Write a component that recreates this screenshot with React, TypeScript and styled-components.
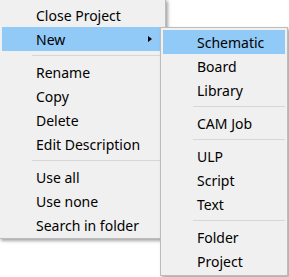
import React from "react";
import styled, {createGlobalStyle} from "styled-components";

const GlobalStyle = createGlobalStyle`
  html, body {
    margin: 0;
    padding: 0;
    background: #ffffff;
  }
  body {
    font-family: "Noto Sans", "Open Sans", "Liberation Sans", sans-serif;
    font-size: 14px;
    color: #000000;
  }
`

type Entry = { label: string, active?: boolean, sub?: boolean } | 'sep'

const mainItems: Entry[] = [
  {label: 'Close Project'},
  {label: 'New', active: true, sub: true},
  'sep',
  {label: 'Rename'},
  {label: 'Copy'},
  {label: 'Delete'},
  {label: 'Edit Description'},
  'sep',
  {label: 'Use all'},
  {label: 'Use none'},
  {label: 'Search in folder'},
]

const newItems: Entry[] = [
  {label: 'Schematic', active: true},
  {label: 'Board'},
  {label: 'Library'},
  'sep',
  {label: 'CAM Job'},
  'sep',
  {label: 'ULP'},
  {label: 'Script'},
  {label: 'Text'},
  'sep',
  {label: 'Folder'},
  {label: 'Project'},
]

const renderItems = (items: Entry[]) =>
  items.map((it, i) =>
    it === 'sep'
      ? <Separator key={i}/>
      : (
        <Item key={i} $active={it.active}>
          <Label>{it.label}</Label>
          {it.sub && <Arrow/>}
        </Item>
      )
  )

export default function App() {
  return (
    <>
      <GlobalStyle/>
      <Stage>
        <MainMenu>{renderItems(mainItems)}</MainMenu>
        <SubMenu>{renderItems(newItems)}</SubMenu>
      </Stage>
    </>
  )
}

const Stage = styled.div`
    position: relative;
    width: 289px;
    height: 277px;
    overflow: hidden;
`

const MainMenu = styled.div`
    box-sizing: border-box;
    width: 167px;
    margin: -1px 0 0 -1px;
    padding: 3px 2px 1px;
    display: flex;
    flex-direction: column;
    background: #f0f0f0;
    border: 1px solid #bcbcbc;
    box-shadow: 2px 2px 3px rgba(0, 0, 0, 0.35);
`

// the "New" submenu sits over the right edge of the main menu
const SubMenu = styled(MainMenu)`
    position: absolute;
    left: 160px;
    top: 27px;
    width: 128px;
    margin: 0;
    padding: 2px;
`

const Item = styled.div<{ $active?: boolean }>`
    height: 24px;
    display: flex;
    align-items: center;
    padding: 0 11px 0 34px;
    background: ${props => props.$active ? '#91c9f7' : 'transparent'};
`

const Label = styled.span`
    flex-grow: 1;
    white-space: nowrap;
    line-height: 23px;
    padding-top: 1px;
`

const Arrow = styled.span`
    width: 0;
    height: 0;
    border-top: 3.5px solid transparent;
    border-bottom: 3.5px solid transparent;
    border-left: 4px solid #000000;
`

const Separator = styled.div`
    height: 1px;
    margin: 4px 0 4px 30px;
    background: #d7d7d7;
`
